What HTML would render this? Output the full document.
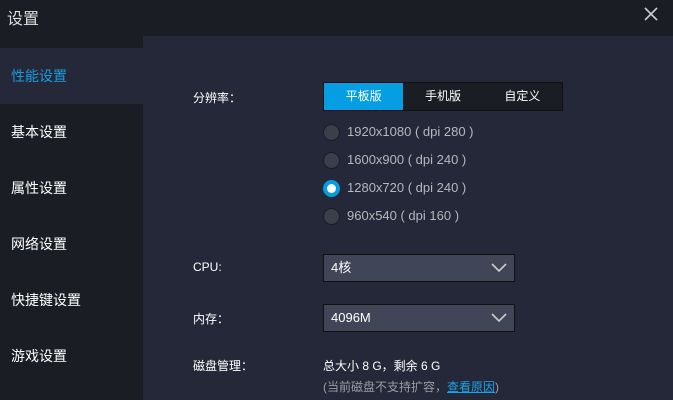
<!DOCTYPE html>
<html><head><meta charset="utf-8"><style>
*{margin:0;padding:0;box-sizing:border-box}
body{width:673px;height:400px;overflow:hidden;background:#1b1d25;font-family:"Liberation Sans","Noto Sans CJK SC",sans-serif;position:relative;color:#fff}
.a{position:absolute;white-space:nowrap}
#content{position:absolute;left:143px;top:36px;width:530px;height:364px;background:#252838}
.side{position:absolute;left:0;width:143px;height:56px;font-size:14px;line-height:56px;padding-left:11px;color:#fff}
.lbl{font-size:12px;color:#fff}
.tabs{position:absolute;left:323px;top:82px;width:240px;height:29px;background:#1b1d25;border:1px solid #111;display:flex}
.tabs div{width:80px;text-align:center;font-size:12px;line-height:27px;color:#fff}
.r{position:absolute;left:323px;width:17px;height:17px;border-radius:50%;background:#3b3e4b;border:1px solid #1b1d25}
.rt{position:absolute;left:347px;font-size:13px;color:#b5b7bf}
.sel{position:absolute;left:323px;width:192px;height:28px;background:#414558;border:1px solid #111;font-size:13px;line-height:26px;padding-left:7px;color:#fff}
.sel svg{position:absolute;right:7px;top:8px}
</style></head><body>
<div class="a" style="left:7px;top:5px;font-size:16px;color:#ddd">设置</div>
<svg class="a" style="left:644px;top:7px" width="14" height="14"><path d="M1 1L13 13M13 1L1 13" stroke="#ccc" stroke-width="1.6"/></svg>
<div id="content"></div>
<div class="side" style="top:48px;background:#252838;color:#1a9be0">性能设置</div>
<div class="side" style="top:104px">基本设置</div>
<div class="side" style="top:160px">属性设置</div>
<div class="side" style="top:216px">网络设置</div>
<div class="side" style="top:272px">快捷键设置</div>
<div class="side" style="top:328px">游戏设置</div>

<div class="a lbl" style="left:193px;top:89px">分辨率：</div>
<div class="tabs"><div style="background:#069ee3">平板版</div><div>手机版</div><div>自定义</div></div>
<div class="r" style="top:124px"></div><div class="rt" style="top:124px">1920x1080 ( dpi 280 )</div>
<div class="r" style="top:152px"></div><div class="rt" style="top:152px">1600x900 ( dpi 240 )</div>
<div class="r" style="top:180px;background:#fff;border:4px solid #079ce2"></div><div class="rt" style="top:180px">1280x720 ( dpi 240 )</div>
<div class="r" style="top:208px"></div><div class="rt" style="top:208px">960x540 ( dpi 160 )</div>

<div class="a lbl" style="left:193px;top:260px">CPU:</div>
<div class="sel" style="top:254px">4核<svg width="16" height="10"><path d="M1 1L8 8L15 1" fill="none" stroke="#ccc" stroke-width="1.6"/></svg></div>
<div class="a lbl" style="left:193px;top:310px">内存：</div>
<div class="sel" style="top:304px">4096M<svg width="16" height="10"><path d="M1 1L8 8L15 1" fill="none" stroke="#ccc" stroke-width="1.6"/></svg></div>
<div class="a lbl" style="left:193px;top:357px">磁盘管理：</div>
<div class="a" style="left:323px;top:357px;font-size:12px;color:#fff">总大小 8 G，剩余 6 G</div>
<div class="a" style="left:323px;top:378px;font-size:12px;color:#9a9ca5">(当前磁盘不支持扩容，<span style="color:#1aa3e8;text-decoration:underline">查看原因</span>)</div>
</body></html>
